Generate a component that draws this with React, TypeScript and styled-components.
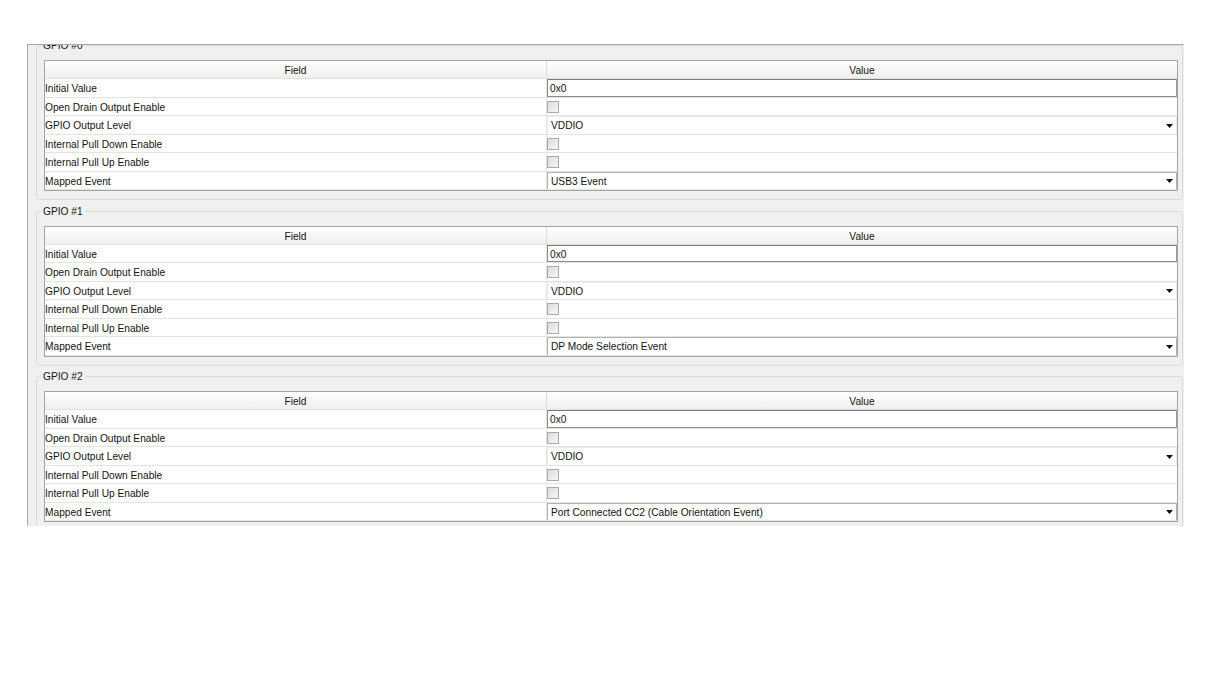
import React from "react";
import styled, { createGlobalStyle } from "styled-components";

const Global = createGlobalStyle`
  html, body { margin: 0; padding: 0; background: #ffffff; }
  body { font-family: "Liberation Sans", Arial, sans-serif; font-size: 10.2px; color: #141414; }
`;

const Page = styled.div`
  padding: 44px 0 0 27px;
  width: 1230px;
  height: 691px;
  box-sizing: border-box;
`;

const Panel = styled.div`
  width: 1157px;
  height: 482px;
  box-sizing: border-box;
  border-top: 1px solid #a9a9a9;
  border-left: 1px solid #a9a9a9;
  background: #f0f0f0;
  overflow: hidden;
`;

const Scroller = styled.div`
  margin-top: -6px;
  padding: 0 1px 0 8px;
  display: flex;
  flex-direction: column;
  gap: 4.5px;
`;

const Group = styled.fieldset`
  margin: 0;
  padding: 8px 4px 8px 7px;
  border: 1px solid #dadada;
  border-radius: 3px;
  min-width: 0;
`;

const Legend = styled.legend`
  padding: 0 2px;
  margin-left: -3px;
  font-size: 10.2px;
  line-height: 13px;
  color: #141414;
`;

const Table = styled.div`
  display: grid;
  grid-template-columns: 502px 1fr;
  border: 1px solid #a4a4a4;
  background: #ffffff;
`;

const HeadCell = styled.div<{ $last?: boolean }>`
  height: 18px;
  line-height: 19px;
  text-align: center;
  background: linear-gradient(#ffffff, #efefef);
  border-right: ${(p) => (p.$last ? "none" : "1px solid #dcdcdc")};
  border-bottom: 1px solid #e0e0e0;
  box-sizing: border-box;
`;

const FieldCell = styled.div`
  height: 18.5px;
  line-height: 19px;
  padding-left: 0;
  border-bottom: 1px solid #e4e4e4;
  border-right: 1px solid #e4e4e4;
  box-sizing: border-box;
  white-space: nowrap;
`;

const ValueCell = styled.div`
  height: 18.5px;
  box-sizing: border-box;
  border-bottom: 1px solid #e4e4e4;
  display: flex;
  align-items: stretch;
`;

const TextInput = styled.div`
  flex: 1;
  border: 1px solid #8a8a8a;
  border-top-color: #7a7a7a;
  border-right-color: #9a9a9a;
  padding-left: 2px;
  line-height: 17px;
  background: #fff;
  box-sizing: border-box;
`;

const CheckBox = styled.div`
  width: 12px;
  height: 12px;
  margin-top: 3px;
  box-sizing: border-box;
  border: 1px solid #a9a9a9;
  background: linear-gradient(135deg, #dcdcdc, #f7f7f7);
`;

const Select = styled.div<{ $framed?: boolean }>`
  flex: 1;
  display: flex;
  align-items: center;
  justify-content: space-between;
  padding: 1px 3px 0 3px;
  box-sizing: border-box;
  border: 1px solid ${(p) => (p.$framed ? "#b2b2b2" : "#ececec")};
  border-bottom: none;
  background: #fff;
`;

const Arrow = styled.svg`
  width: 7px;
  height: 4px;
  flex: none;
`;

type Row =
  | { label: string; kind: "text"; value: string }
  | { label: string; kind: "check" }
  | { label: string; kind: "select"; value: string; framed?: boolean };

const rowsFor = (event: string): Row[] => [
  { label: "Initial Value", kind: "text", value: "0x0" },
  { label: "Open Drain Output Enable", kind: "check" },
  { label: "GPIO Output Level", kind: "select", value: "VDDIO" },
  { label: "Internal Pull Down Enable", kind: "check" },
  { label: "Internal Pull Up Enable", kind: "check" },
  { label: "Mapped Event", kind: "select", value: event, framed: true },
];

const groups = [
  { title: "GPIO #0", event: "USB3 Event" },
  { title: "GPIO #1", event: "DP Mode Selection Event" },
  { title: "GPIO #2", event: "Port Connected CC2 (Cable Orientation Event)" },
];

function Value({ row }: { row: Row }) {
  if (row.kind === "text") return <TextInput>{row.value}</TextInput>;
  if (row.kind === "check") return <CheckBox />;
  return (
    <Select $framed={row.framed}>
      <span>{row.value}</span>
      <Arrow viewBox="0 0 7 4">
        <path d="M0 0 H7 L3.5 4 Z" fill="#111" />
      </Arrow>
    </Select>
  );
}

export default function App() {
  return (
    <>
      <Global />
      <Page>
        <Panel>
          <Scroller>
            {groups.map((g) => (
              <Group key={g.title}>
                <Legend>{g.title}</Legend>
                <Table>
                  <HeadCell>Field</HeadCell>
                  <HeadCell $last>Value</HeadCell>
                  {rowsFor(g.event).map((r) => (
                    <React.Fragment key={r.label}>
                      <FieldCell>{r.label}</FieldCell>
                      <ValueCell>
                        <Value row={r} />
                      </ValueCell>
                    </React.Fragment>
                  ))}
                </Table>
              </Group>
            ))}
          </Scroller>
        </Panel>
      </Page>
    </>
  );
}
